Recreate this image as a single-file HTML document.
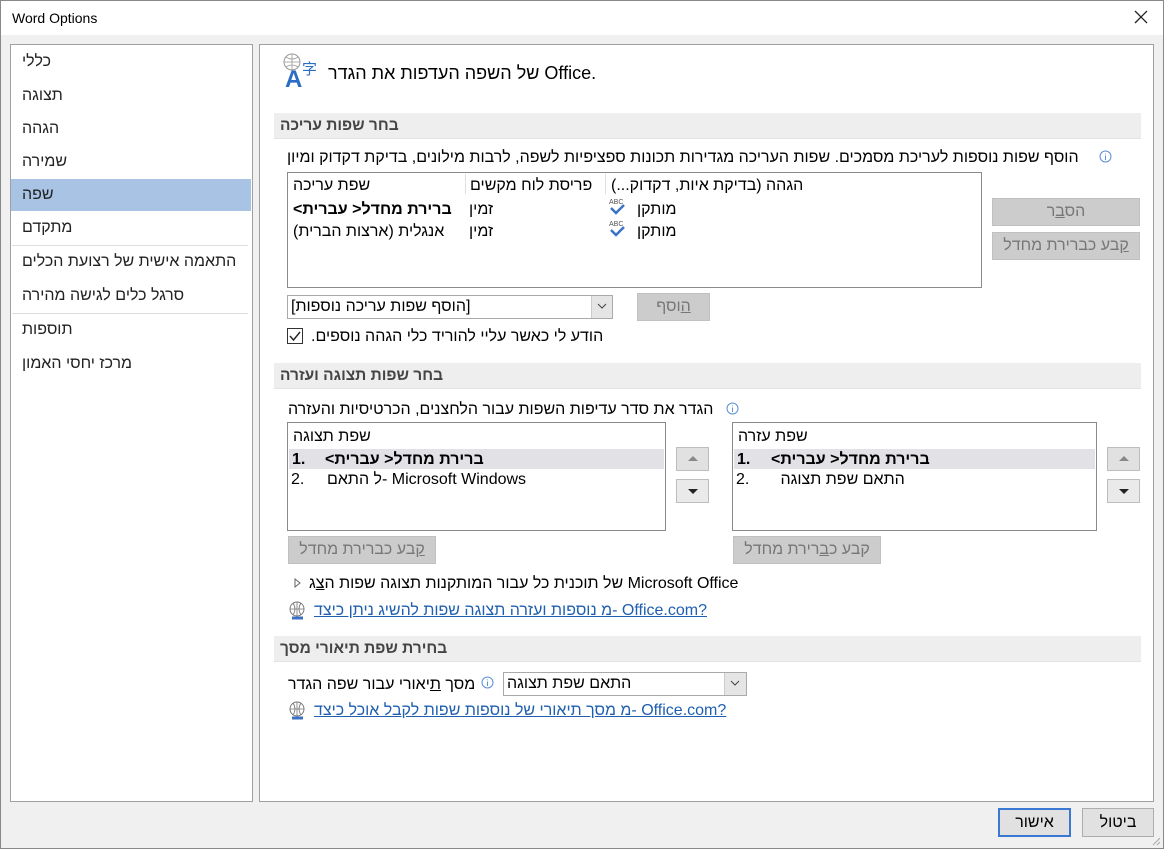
<!DOCTYPE html>
<html><head><meta charset="utf-8"><style>
*{margin:0;padding:0;box-sizing:border-box}
body{width:1164px;height:849px;background:#fff;font-family:"Liberation Sans","DejaVu Sans",sans-serif;font-size:16px;color:#000;position:relative;overflow:hidden}
.a{position:absolute}
.t{position:absolute;white-space:nowrap;line-height:18px}
.r{direction:rtl;unicode-bidi:plaintext}
.box{position:absolute;background:#fff;border:1px solid #adadad}
.hdr{position:absolute;left:274px;width:867px;height:26px;background:#eeeeee;border-bottom:1px solid #e3e3e3}
.hdr span{position:absolute;left:6px;top:4px;font-weight:bold;color:#444;font-size:15.5px;direction:rtl}
.btn{position:absolute;background:#cccccc;border:1px solid #c0c0c0;color:#777;text-align:center;line-height:25px;font-size:16px}
.lb{position:absolute;background:#fff;border:1px solid #8a8a8a}
.sel{position:absolute;background:#e1e1e6}
.link{color:#1f5fb0;text-decoration:underline}
.side{left:22px;font-size:16px;color:#222}
.ar{position:absolute;width:33px;height:24px;background:#e1e1e1;border:1px solid #bdbdbd}
</style></head><body>
<div class="a" style="left:0;top:0;width:1164px;height:849px;background:#f0f0f0;border:1px solid #888"></div>
<div class="a" style="left:1px;top:1px;width:1162px;height:34px;background:#fff"></div>
<div class="t" style="left:12px;top:9px;font-size:14px">Word Options</div>
<svg class="a" style="left:1134px;top:10px" width="14" height="14"><path d="M1 1L13 13M13 1L1 13" stroke="#222" stroke-width="1.3"/></svg>

<!-- sidebar -->
<div class="box" style="left:10px;top:44px;width:243px;height:758px;border-color:#a0a0a0"></div>
<div class="a" style="left:11px;top:179px;width:240px;height:32px;background:#a9c3e5"></div>
<div class="t r side" style="top:53px">כללי</div>
<div class="t r side" style="top:87px">תצוגה</div>
<div class="t r side" style="top:120px">הגהה</div>
<div class="t r side" style="top:153px">שמירה</div>
<div class="t r side" style="top:186px">שפה</div>
<div class="t r side" style="top:219px">מתקדם</div>
<div class="a" style="left:12px;top:245px;width:236px;height:1px;background:#ddd"></div>
<div class="t r side" style="top:253px">התאמה אישית של רצועת הכלים</div>
<div class="t r side" style="top:287px">סרגל כלים לגישה מהירה</div>
<div class="a" style="left:12px;top:313px;width:236px;height:1px;background:#ddd"></div>
<div class="t r side" style="top:321px">תוספות</div>
<div class="t r side" style="top:355px">מרכז יחסי האמון</div>

<!-- content -->
<div class="box" style="left:259px;top:44px;width:895px;height:758px;border-color:#a0a0a0"></div>
<svg class="a" style="left:282px;top:52px" width="40" height="38">
<circle cx="10" cy="10" r="8" fill="none" stroke="#999" stroke-width="1"/><path d="M2 10H18M10 2V18M4 5Q10 9 16 5M4 15Q10 11 16 15" stroke="#999" fill="none" stroke-width="0.8"/>
<text x="3" y="35" font-family="Liberation Sans" font-weight="bold" font-size="24" fill="#2b6cc4">A</text>
<text x="20" y="22" font-family="Noto Sans CJK SC" font-size="15" fill="#2b6cc4">字</text></svg>
<div class="t" style="left:328px;top:62px;font-size:18px;line-height:22px;direction:ltr">של השפה העדפות את הגדר Office.</div>

<div class="hdr" style="top:113px"><span>בחר שפות עריכה</span></div>
<div class="t r" style="left:287px;top:149px">הוסף שפות נוספות לעריכת מסמכים. שפות העריכה מגדירות תכונות ספציפיות לשפה, לרבות מילונים, בדיקת דקדוק ומיון</div>
<svg class="a" style="left:1099px;top:150px" width="13" height="13"><circle cx="6.5" cy="6.5" r="5.5" fill="none" stroke="#5b8fd6"/><path d="M6.5 5.5V10M6.5 3.5V4.2" stroke="#5b8fd6"/></svg>
<div class="lb" style="left:287px;top:172px;width:695px;height:116px"></div>
<div class="a" style="left:465px;top:174px;width:1px;height:20px;background:#e0e0e0"></div>
<div class="a" style="left:605px;top:174px;width:1px;height:20px;background:#e0e0e0"></div>
<div class="t r" style="left:293px;top:177px">שפת עריכה</div>
<div class="t r" style="left:470px;top:177px">פריסת לוח מקשים</div>
<div class="t r" style="left:611px;top:177px">הגהה (בדיקת איות, דקדוק...)</div>
<div class="t" style="left:293px;top:201px;font-weight:bold;direction:ltr">&lt;ברירת מחדל&lt; עברית</div>
<div class="t r" style="left:469px;top:201px">זמין</div>
<div class="t r" style="left:293px;top:223px">אנגלית (ארצות הברית)</div>
<div class="t r" style="left:469px;top:223px">זמין</div>
<svg class="a" style="left:608px;top:196px" width="22" height="44"><text x="1" y="8" font-size="7" fill="#555" font-family="Liberation Sans">ABC</text><path d="M3 12L8 17L16 9" stroke="#3a72c4" stroke-width="2.5" fill="none"/><text x="1" y="30" font-size="7" fill="#555" font-family="Liberation Sans">ABC</text><path d="M3 34L8 39L16 31" stroke="#3a72c4" stroke-width="2.5" fill="none"/></svg>
<div class="t r" style="left:637px;top:201px">מותקן</div>
<div class="t r" style="left:637px;top:223px">מותקן</div>
<div class="btn" style="left:992px;top:198px;width:148px;height:28px">הס<u>ב</u>ר</div>
<div class="btn" style="left:992px;top:232px;width:148px;height:28px"><u>ק</u>בע כברירת מחדל</div>

<div class="lb" style="left:287px;top:295px;width:326px;height:24px;border-color:#aaa"></div>
<div class="t r" style="left:291px;top:298px">[הוסף שפות עריכה נוספות]</div>
<div class="a" style="left:591px;top:296px;width:21px;height:22px;background:#e5e5e5;border-left:1px solid #ccc"></div>
<svg class="a" style="left:596px;top:302px" width="12" height="8"><path d="M2 2L6 6L10 2" stroke="#444" fill="none"/></svg>
<div class="btn" style="left:637px;top:293px;width:73px;height:28px"><u>ה</u>וסף</div>
<div class="a" style="left:287px;top:328px;width:16px;height:16px;border:1px solid #333;background:#fff"></div>
<svg class="a" style="left:288px;top:329px" width="14" height="14"><path d="M2 7L5.5 11L12 3" stroke="#222" stroke-width="1.4" fill="none"/></svg>
<div class="t r" style="left:311px;top:328px">הודע לי כאשר עליי להוריד כלי הגהה נוספים.</div>

<div class="hdr" style="top:363px"><span>בחר שפות תצוגה ועזרה</span></div>
<div class="t r" style="left:288px;top:401px">הגדר את סדר עדיפות השפות עבור הלחצנים, הכרטיסיות והעזרה</div>
<svg class="a" style="left:726px;top:402px" width="13" height="13"><circle cx="6.5" cy="6.5" r="5.5" fill="none" stroke="#5b8fd6"/><path d="M6.5 5.5V10M6.5 3.5V4.2" stroke="#5b8fd6"/></svg>

<div class="lb" style="left:287px;top:422px;width:379px;height:109px"></div>
<div class="sel" style="left:289px;top:449px;width:375px;height:20px"></div>
<div class="t r" style="left:293px;top:428px">שפת תצוגה</div>
<div class="t" style="left:292px;top:451px;font-weight:bold">1.</div>
<div class="t" style="left:325px;top:451px;font-weight:bold;direction:ltr">&lt;ברירת מחדל&lt; עברית</div>
<div class="t" style="left:291px;top:471px">2.</div>
<div class="t" style="left:327px;top:471px;direction:ltr">ל התאם- Microsoft Windows</div>
<div class="ar" style="left:676px;top:447px"></div><svg class="a" style="left:687px;top:455px" width="12" height="8"><path d="M1 6L6 1L11 6Z" fill="#888"/></svg>
<div class="ar" style="left:676px;top:479px;background:#eaeaea"></div><svg class="a" style="left:687px;top:487px" width="12" height="8"><path d="M1 2L6 7L11 2Z" fill="#222"/></svg>
<div class="btn" style="left:288px;top:536px;width:148px;height:28px"><u>ק</u>בע כברירת מחדל</div>

<div class="lb" style="left:732px;top:422px;width:365px;height:109px"></div>
<div class="sel" style="left:734px;top:449px;width:361px;height:20px"></div>
<div class="t r" style="left:738px;top:428px">שפת עזרה</div>
<div class="t" style="left:737px;top:451px;font-weight:bold">1.</div>
<div class="t" style="left:771px;top:451px;font-weight:bold;direction:ltr">&lt;ברירת מחדל&lt; עברית</div>
<div class="t" style="left:736px;top:471px;direction:ltr">התאם שפת תצוגה&nbsp;&nbsp;&nbsp;&nbsp;&nbsp;&nbsp;&nbsp;.2</div>
<div class="ar" style="left:1107px;top:447px"></div><svg class="a" style="left:1118px;top:455px" width="12" height="8"><path d="M1 6L6 1L11 6Z" fill="#888"/></svg>
<div class="ar" style="left:1107px;top:479px;background:#eaeaea"></div><svg class="a" style="left:1118px;top:487px" width="12" height="8"><path d="M1 2L6 7L11 2Z" fill="#222"/></svg>
<div class="btn" style="left:733px;top:536px;width:148px;height:28px">קבע כ<u>ב</u>רירת מחדל</div>

<svg class="a" style="left:294px;top:578px" width="8" height="10"><path d="M1 1L6 5L1 9Z" fill="none" stroke="#666"/></svg>
<div class="t" style="left:309px;top:575px;direction:ltr">של תוכנית כל עבור המותקנות תצוגה שפות ה<u>צ</u>ג Microsoft Office</div>
<svg class="a" style="left:288px;top:601px" width="20" height="20"><circle cx="9" cy="8" r="7" fill="none" stroke="#777"/><path d="M2 8H16M9 1V15M5 2Q9 8 5 14M13 2Q9 8 13 14" stroke="#777" fill="none" stroke-width="0.8"/><path d="M4 17H15" stroke="#3a72c4" stroke-width="3"/></svg>
<div class="t link" style="left:314px;top:602px;direction:ltr">מ נוספות ועזרה תצוגה שפות להשיג ניתן כיצד- Office.com?</div>

<div class="hdr" style="top:636px"><span>בחירת שפת תיאורי מסך</span></div>
<div class="t" style="left:288px;top:676px;direction:ltr">מסך <u>ת</u>יאורי עבור שפה הגדר</div>
<svg class="a" style="left:481px;top:676px" width="13" height="13"><circle cx="6.5" cy="6.5" r="5.5" fill="none" stroke="#5b8fd6"/><path d="M6.5 5.5V10M6.5 3.5V4.2" stroke="#5b8fd6"/></svg>
<div class="lb" style="left:503px;top:672px;width:244px;height:24px;border-color:#aaa"></div>
<div class="t r" style="left:507px;top:675px">התאם שפת תצוגה</div>
<div class="a" style="left:724px;top:673px;width:22px;height:22px;background:#e5e5e5;border-left:1px solid #ccc"></div>
<svg class="a" style="left:729px;top:679px" width="12" height="8"><path d="M2 2L6 6L10 2" stroke="#444" fill="none"/></svg>
<svg class="a" style="left:288px;top:701px" width="20" height="20"><circle cx="9" cy="8" r="7" fill="none" stroke="#777"/><path d="M2 8H16M9 1V15M5 2Q9 8 5 14M13 2Q9 8 13 14" stroke="#777" fill="none" stroke-width="0.8"/><path d="M4 17H15" stroke="#3a72c4" stroke-width="3"/></svg>
<div class="t link" style="left:314px;top:702px;direction:ltr">מ מסך תיאורי של נוספות שפות לקבל אוכל כיצד- Office.com?</div>

<!-- bottom buttons -->
<div class="a" style="left:998px;top:808px;width:73px;height:29px;background:#e1e1e1;border:2px solid #3a78d4;text-align:center;line-height:25px">אישור</div>
<div class="a" style="left:1082px;top:808px;width:72px;height:29px;background:#e1e1e1;border:1px solid #adadad;text-align:center;line-height:27px">ביטול</div>
<svg class="a" style="left:1150px;top:835px" width="12" height="12"><path d="M10 3L3 10M10 7L7 10" stroke="#aaa"/></svg>
</body></html>
